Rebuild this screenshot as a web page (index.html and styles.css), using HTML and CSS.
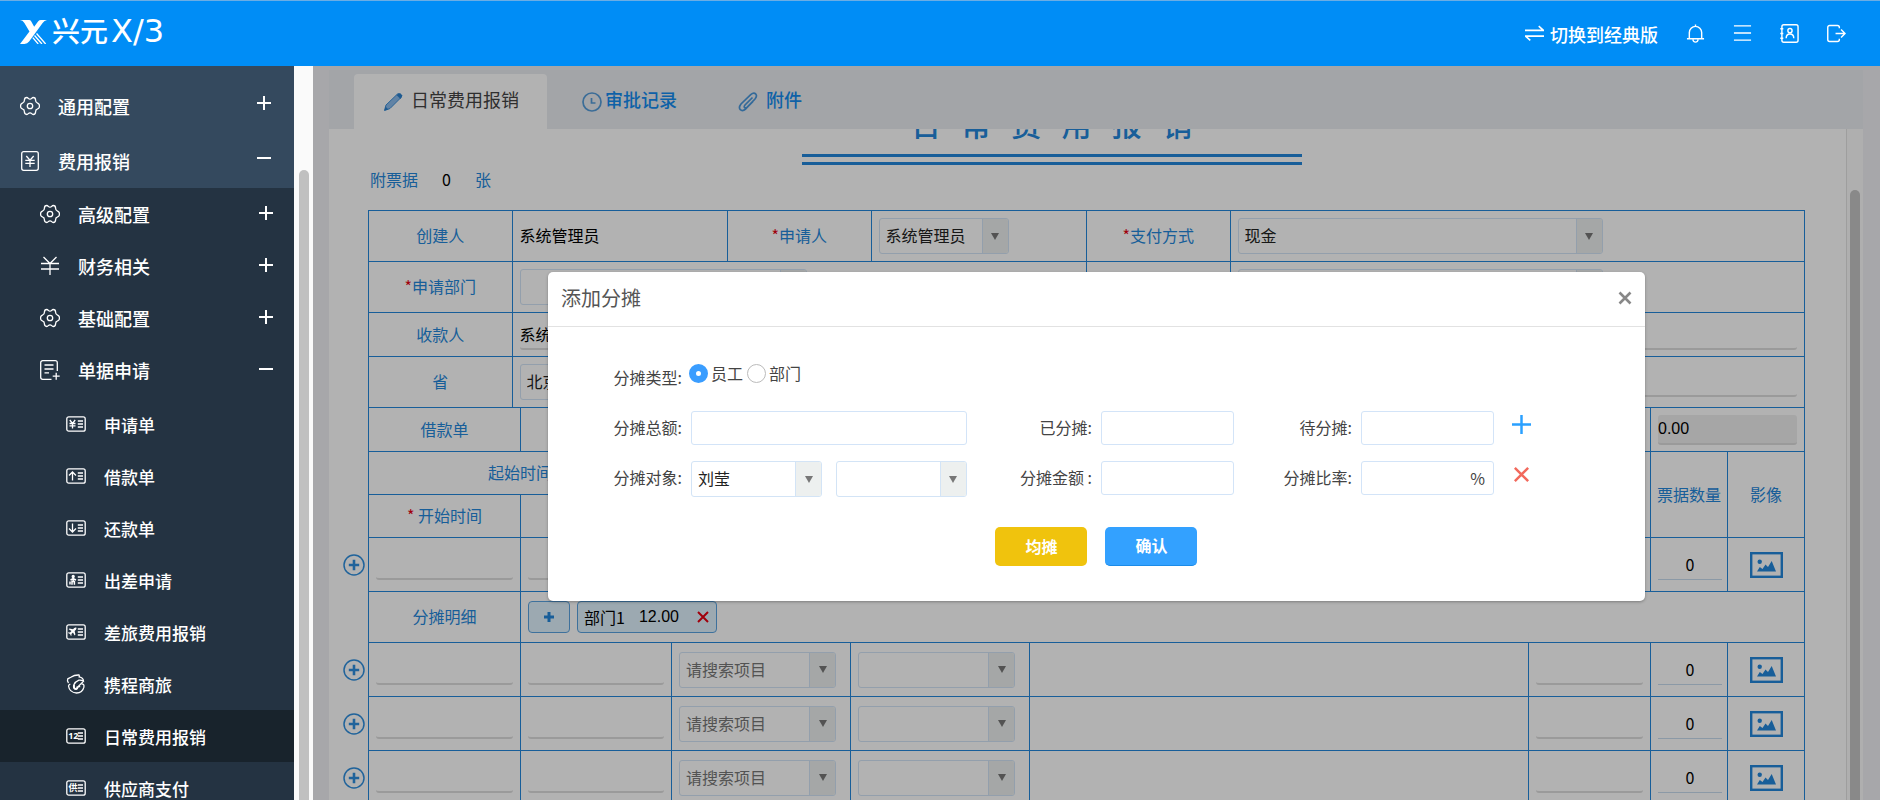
FILE: index.html
```html
<!DOCTYPE html>
<html lang="zh-CN">
<head>
<meta charset="utf-8">
<title>日常费用报销</title>
<link rel="stylesheet" href="styles.css">
</head>
<body>
<svg class="sprite" aria-hidden="true">
  <symbol id="i-gear" viewBox="0 0 20 20"><path d="M10 3.2C11.8 3.2 11.6 1.5 13.2 1.5C15 1.5 15.6 2.8 15.6 4.2C15.6 5.6 16 6.5 17.2 6.8C18.6 7.2 19.5 8.4 19.5 10C19.5 11.6 18.6 12.8 17.2 13.2C16 13.5 15.6 14.4 15.6 15.8C15.6 17.2 15 18.5 13.2 18.5C11.6 18.5 11.8 16.8 10 16.8C8.2 16.8 8.4 18.5 6.8 18.5C5 18.5 4.4 17.2 4.4 15.8C4.4 14.4 4 13.5 2.8 13.2C1.4 12.8 .5 11.6 .5 10C.5 8.4 1.4 7.2 2.8 6.8C4 6.5 4.4 5.6 4.4 4.2C4.4 2.8 5 1.5 6.8 1.5C8.4 1.5 8.2 3.2 10 3.2Z"/><circle cx="10" cy="10" r="2.7"/></symbol>
  <symbol id="i-yenbox" viewBox="0 0 20 20"><rect x="1.7" y=".7" width="16.6" height="18.6" rx="2"/><path d="M6.3 5l3.7 4.2L13.7 5M10 9.2V16M5.3 9.4h9.4M5.3 12.4h9.4"/></symbol>
  <symbol id="i-yen" viewBox="0 0 20 20"><path d="M3.500 1l6.500 6.500L16.500 1M10 7.500V19M1 7.500h18M1 13h18"/></symbol>
  <symbol id="i-doc" viewBox="0 0 20 20"><path d="M17.300 11V2.700a2 2 0 0 0-2-2H2.700a2 2 0 0 0-2 2v14.600a2 2 0 0 0 2 2H11.500M4.500 5h9M4.500 9h9M4.500 12.800h4.500M16.200 12.700v7M12.700 16.200h7"/></symbol>
  <symbol id="i-lines" viewBox="0 0 20 16"><rect x=".8" y=".8" width="18.400" height="14.400" rx="2"/><path d="M11.800 5h5.200M11.800 8h5.200M11.800 11h5.200"/></symbol>
  <symbol id="i-plus" viewBox="0 0 14 14"><path d="M7 0v14M0 7h14"/></symbol>
  <symbol id="i-minus" viewBox="0 0 14 14"><path d="M0 7h14"/></symbol>
  <symbol id="i-addround" viewBox="0 0 22 22"><circle cx="11" cy="11" r="10" stroke-width="1.500"/><path d="M11 5.800v10.400M5.800 11h10.400" stroke-width="2.600"/></symbol>
  <symbol id="i-image" viewBox="0 0 33 26"><rect x="1.200" y="1.200" width="30.600" height="23.600" fill="none" stroke="currentColor" stroke-width="2.400"/><circle cx="9.700" cy="9.700" r="2.200"/><path d="M7 19.500l2.800-4.500 2.700 2 3-4.500 2.500 2.500L21.700 9l4.300 10.500z"/></symbol>
</svg>

<header class="topbar">
  <div class="brand">
    <svg class="brand-mark" viewBox="0 0 80 71"><path fill="#fff" d="M0 0h27q4 0 6 4l9 16 12-16q3-4 8-4h18q-8 1-13 9L46 38 27 64q-5 7-14 7H0L28 34 13 9Q8 0 0 0z"/><path stroke="#fff" stroke-width="4" fill="none" d="M49 40l27 31M43 46l22 25M38 52l16 19"/></svg>
    <span class="brand-name">兴元<b>X/3</b></span>
  </div>
  <nav class="tools">
    <a class="switch" href="#"><svg class="ic" viewBox="0 0 18 16"><path d="M0 5h17.500l-4.500-4M18 10.500H.5L5 14.500"/></svg>切换到经典版</a>
    <button class="tool" aria-label="通知"><svg class="ic" viewBox="0 0 20 20"><path d="M1 15.500h18M3.500 15.500V9a6.500 6.500 0 0 1 13 0v6.500M10 2.500V.5M7.200 16.500q.6 2.600 2.800 2.600t2.800-2.600"/></svg></button>
    <button class="tool" aria-label="菜单"><svg class="ic" viewBox="0 0 20 20"><path d="M1 2h18M1 9.500h18M1 17h18"/></svg></button>
    <button class="tool" aria-label="通讯录"><svg class="ic" viewBox="0 0 20 20"><rect x="2" y=".8" width="17" height="18.400" rx="2"/><circle cx="10.500" cy="7" r="2.200"/><path d="M6.500 15q0-4.500 4-4.500t4 4.500M.3 5h3.200M.3 10h3.200M.3 15h3.200"/></svg></button>
    <button class="tool" aria-label="退出"><svg class="ic" viewBox="0 0 20 20"><path d="M13 4.500V3.600a2 2 0 0 0-2-2H2.800a2 2 0 0 0-2 2v12.800a2 2 0 0 0 2 2H11a2 2 0 0 0 2-2v-.9M9 10h10M14.800 5.800L19 10l-4.200 4.200"/></svg></button>
  </nav>
</header>

<div class="body">
  <aside class="sidebar">
    <ul class="menu">
      <li><a class="m1" href="#"><svg class="ic"><use href="#i-gear"/></svg><span>通用配置</span><svg class="sign"><use href="#i-plus"/></svg></a></li>
      <li><a class="m1" href="#"><svg class="ic"><use href="#i-yenbox"/></svg><span>费用报销</span><svg class="sign"><use href="#i-minus"/></svg></a></li>
    </ul>
    <ul class="menu sub">
      <li><a class="m2" href="#"><svg class="ic"><use href="#i-gear"/></svg><span>高级配置</span><svg class="sign"><use href="#i-plus"/></svg></a></li>
      <li><a class="m2" href="#"><svg class="ic"><use href="#i-yen"/></svg><span>财务相关</span><svg class="sign"><use href="#i-plus"/></svg></a></li>
      <li><a class="m2" href="#"><svg class="ic"><use href="#i-gear"/></svg><span>基础配置</span><svg class="sign"><use href="#i-plus"/></svg></a></li>
      <li><a class="m2" href="#"><svg class="ic"><use href="#i-doc"/></svg><span>单据申请</span><svg class="sign"><use href="#i-minus"/></svg></a>
        <ul class="menu leafs">
          <li><a class="m3" href="#"><svg class="card" viewBox="0 0 20 16"><use href="#i-lines"/><path d="M3.800 4l2.700 3.500L9.200 4M6.500 7.500V12.500M3.500 7.500h6M3.500 9.800h6"/></svg><span>申请单</span></a></li>
          <li><a class="m3" href="#"><svg class="card" viewBox="0 0 20 16"><use href="#i-lines"/><path d="M6.500 12.500V4M3 7.500L6.500 4 10 7.500"/></svg><span>借款单</span></a></li>
          <li><a class="m3" href="#"><svg class="card" viewBox="0 0 20 16"><use href="#i-lines"/><path d="M6.500 3.500V12M3 8.500L6.500 12 10 8.500"/></svg><span>还款单</span></a></li>
          <li><a class="m3" href="#"><svg class="card" viewBox="0 0 20 16"><use href="#i-lines"/><circle cx="7.200" cy="4.500" r="1" fill="#fff"/><path d="M4.500 8L7.200 6.500 10 8M7.200 6.500V9.500M6 12.800V9.500h2.400v3.300M4 9.500v3" stroke-width="1.500"/></svg><span>出差申请</span></a></li>
          <li><a class="m3" href="#"><svg class="card" viewBox="0 0 20 16"><use href="#i-lines"/><path fill="#fff" stroke="none" d="M10.300 3.600q-1-.6-2 .4L7 5.300 3.500 4.500l-.8.800 2.800 1.600L4 8.500l-1.400-.2-.6.600 2 1 1 2 .6-.6-.2-1.400L7 8.500l1.600 2.900.8-.8L8.600 7l1.300-1.300q1-1 .4-2.100z"/></svg><span>差旅费用报销</span></a></li>
          <li><a class="m3" href="#"><svg class="ic dolphin" viewBox="0 0 20 20"><path d="M2.500 9Q.8 7 1.800 4.800L4.800 3.300Q8.500 .8 13 1q.6 1 .2 1.800 4.300.8 4.300 4.400-2.200-1.400-4.600-1.100-3.600 1.400-5 4.700-.8 3 1.200 4 2.600.4 3.100-2.300L16.800 8"/><path d="M15.500 9.800q3 0 2.400 3.400Q16.500 19 10.500 19 3.500 18.500 2.500 12q.2-1.300 1.800-2M12.200 12.500l2 .2"/><path d="M8 11q-.6 3.800 2 4.100 1.600-.6 1.400-2.800" stroke-width="2"/></svg><span>携程商旅</span></a></li>
          <li><a class="m3 active" href="#"><svg class="card" viewBox="0 0 20 16"><use href="#i-lines"/><text x="2.200" y="11.300" class="card-num">12</text></svg><span>日常费用报销</span></a></li>
          <li><a class="m3" href="#"><svg class="card" viewBox="0 0 20 16"><use href="#i-lines"/><text x="2.500" y="11.300" class="card-han">供</text></svg><span>供应商支付</span></a></li>
        </ul>
      </li>
    </ul>
  </aside>
  <div class="side-track"><div class="side-thumb"></div></div>

  <main class="main">
    <nav class="tabs">
      <a class="tab current" href="#"><svg viewBox="0 0 20 20"><path fill="#8bbcec" stroke="#3d8fd8" d="M1.500 18.500L3 13 14.500 2q1-1 2 0L18 3.500q1 1 0 2L7 16.500z"/><path fill="#2c82cf" d="M13.500 3l3.500-2 2.500 2.500-2 3.500z M1.500 18.500l1-4 3 3z"/></svg><span>日常费用报销</span></a>
      <a class="tab" href="#"><svg viewBox="0 0 20 20" fill="none" stroke="#559cd9" stroke-width="1.700"><circle cx="10" cy="10" r="9"/><path d="M9.500 6v5h4"/></svg><span>审批记录</span></a>
      <a class="tab last" href="#"><svg viewBox="0 0 20 20" fill="none" stroke="#4a98dc" stroke-width="1.700"><path d="M14.500 5.500L7 13q-1.500 2-.2 2.800 1.200.6 2.700-1L17 7q2.500-3 .7-5-2-1.800-5 .7L3 12Q.3 15.500 2.300 17.700q2.200 2 5.400-.7L15 9.500"/></svg><span>附件</span></a>
    </nav>
    <div class="panel">
      <div class="form">
        <h1 class="title">日   常   费   用   报   销</h1>
        <div class="bills"><span>附票据</span><span class="bills-num">0</span><span>张</span></div>

        <table class="sheet">
          <colgroup><col class="w10"><col class="w15"><col class="w10"><col class="w15"><col class="w10"><col></colgroup>
          <tr class="tall"><th>创建人</th><td class="plain">系统管理员</td><th><i>*</i>申请人</th>
            <td><div class="pick p-s"><select aria-label="申请人"><option>系统管理员</option></select><span class="caret"></span></div></td>
            <th><i>*</i>支付方式</th>
            <td><div class="pick p-l"><select aria-label="支付方式"><option>现金</option></select><span class="caret"></span></div></td></tr>
          <tr class="tall"><th><i>*</i>申请部门</th><td colspan="3"><div class="pick p-m"><select aria-label="申请部门"><option></option></select><span class="caret"></span></div></td><th></th>
            <td><div class="pick p-l"><select aria-label="项目"><option></option></select><span class="caret"></span></div></td></tr>
          <tr class="short"><th>收款人</th><td colspan="5"><input class="line" aria-label="收款人" value="系统管理员"></td></tr>
          <tr class="tall"><th>省</th><td colspan="3"><div class="pick p-m"><select aria-label="省"><option>北京</option></select><span class="caret"></span></div></td><td colspan="2"><input class="line" aria-label="开户行"></td></tr>
        </table>

        <table class="sheet second">
          <colgroup><col class="c1"><col class="c2"><col class="c3"><col class="c3"><col><col class="c6"><col class="c7"><col class="c7"></colgroup>
          <tr class="short"><th>借款单</th><td colspan="5"></td><td colspan="2"><input class="total" aria-label="借款金额" value="0.00" readonly></td></tr>
          <tr class="head"><th colspan="2">起始时间</th><td rowspan="2"></td><td rowspan="2"></td><td rowspan="2"></td><td rowspan="2"></td><th rowspan="2" class="tight">票据数量</th><th rowspan="2">影像</th></tr>
          <tr class="head"><th><i>*</i> 开始时间</th><td></td></tr>
          <tr class="item"><td class="first"><button class="add" aria-label="添加行"><svg><use href="#i-addround"/></svg></button><input class="line" aria-label="开始时间"></td><td><input class="line" aria-label="结束时间"></td><td></td><td></td><td></td><td></td><td><input class="count" aria-label="票据数量" value="0"></td><td class="mid"><svg class="pic"><use href="#i-image"/></svg></td></tr>
          <tr class="tall"><th>分摊明细</th><td colspan="7"><div class="tags"><button class="chip chip-add" aria-label="添加分摊"><svg viewBox="0 0 12 12"><path d="M6 1v10M1 6h10"/></svg></button><span class="chip"><span>部门1</span><span>12.00</span><button class="chip-x" aria-label="删除"><svg viewBox="0 0 12 12"><path d="M1 1l10 10M11 1L1 11"/></svg></button></span></div></td></tr>
          <tr class="item"><td class="first"><button class="add" aria-label="添加行"><svg><use href="#i-addround"/></svg></button><input class="line" aria-label="开始时间"></td><td><input class="line" aria-label="结束时间"></td><td><div class="pick p-c hint"><select aria-label="项目"><option>请搜索项目</option></select><span class="caret"></span></div></td><td><div class="pick p-c"><select aria-label="科目"><option></option></select><span class="caret"></span></div></td><td></td><td><input class="line" aria-label="金额"></td><td><input class="count" aria-label="票据数量" value="0"></td><td class="mid"><svg class="pic"><use href="#i-image"/></svg></td></tr>
          <tr class="item"><td class="first"><button class="add" aria-label="添加行"><svg><use href="#i-addround"/></svg></button><input class="line" aria-label="开始时间"></td><td><input class="line" aria-label="结束时间"></td><td><div class="pick p-c hint"><select aria-label="项目"><option>请搜索项目</option></select><span class="caret"></span></div></td><td><div class="pick p-c"><select aria-label="科目"><option></option></select><span class="caret"></span></div></td><td></td><td><input class="line" aria-label="金额"></td><td><input class="count" aria-label="票据数量" value="0"></td><td class="mid"><svg class="pic"><use href="#i-image"/></svg></td></tr>
          <tr class="item"><td class="first"><button class="add" aria-label="添加行"><svg><use href="#i-addround"/></svg></button><input class="line" aria-label="开始时间"></td><td><input class="line" aria-label="结束时间"></td><td><div class="pick p-c hint"><select aria-label="项目"><option>请搜索项目</option></select><span class="caret"></span></div></td><td><div class="pick p-c"><select aria-label="科目"><option></option></select><span class="caret"></span></div></td><td></td><td><input class="line" aria-label="金额"></td><td><input class="count" aria-label="票据数量" value="0"></td><td class="mid"><svg class="pic"><use href="#i-image"/></svg></td></tr>
        </table>
      </div>
      <div class="track"><div class="thumb"></div></div>
    </div>

    <div class="overlay">
      <section class="modal" role="dialog" aria-labelledby="dlg-title">
        <header class="modal-head"><h2 id="dlg-title">添加分摊</h2><button class="close" aria-label="关闭"><svg viewBox="0 0 14 14"><path d="M1.500 1.500l11 11M12.500 1.500l-11 11"/></svg></button></header>
        <form class="fields">
          <span class="lab">分摊类型:</span>
          <div class="radios"><label><input type="radio" name="kind" checked>员工</label><label><input type="radio" name="kind">部门</label></div>
          <label class="lab" for="f-total">分摊总额:</label><input class="box" id="f-total">
          <label class="lab" for="f-done">已分摊:</label><input class="box" id="f-done">
          <label class="lab" for="f-todo">待分摊:</label><input class="box" id="f-todo">
          <button type="button" class="act plus" aria-label="添加"><svg viewBox="0 0 20 20"><path d="M10 0v20M0 10h20"/></svg></button>
          <label class="lab" for="f-who">分摊对象:</label>
          <div class="pair"><div class="pick"><select id="f-who"><option>刘莹</option></select><span class="caret"></span></div><div class="pick"><select aria-label="部门"><option></option></select><span class="caret"></span></div></div>
          <label class="lab" for="f-sum">分摊金额 :</label><input class="box" id="f-sum">
          <label class="lab" for="f-rate">分摊比率:</label><div class="box rate"><input id="f-rate"><span>%</span></div>
          <button type="button" class="act del" aria-label="删除"><svg viewBox="0 0 20 20"><path d="M3 3l14 14M17 3L3 17"/></svg></button>
        </form>
        <footer class="modal-foot"><button class="btn gold">均摊</button><button class="btn blue">确认</button></footer>
      </section>
    </div>
  </main>
</div>
</body>
</html>
```
FILE: styles.css
```css
*, *::before, *::after { box-sizing: border-box; }
body {
  margin: 0;
  height: 100vh;
  display: flex;
  flex-direction: column;
  overflow: hidden;
  font: 16px/24px "Noto Sans CJK SC", "Noto Sans", sans-serif;
  color: #000;
}
a { text-decoration: none; color: inherit; }
ul { list-style: none; margin: 0; padding: 0; }
button { border: 0; padding: 0; background: none; font: inherit; color: inherit; display: flex; align-items: center; justify-content: center; }
input, select { font: inherit; color: inherit; min-width: 0; margin: 0; }
svg { display: block; flex: none; }
.sprite { position: absolute; width: 0; height: 0; }

/* top bar */
.topbar {
  flex: none;
  height: 66px;
  border-top: 1px solid #6bade4;
  background: #008df6;
  color: #fff;
  display: flex;
  justify-content: space-between;
  padding: 0 34px 0 20px;
}
.brand { display: flex; align-items: center; gap: 5px; padding-bottom: 4px; }
.brand-mark { width: 27px; height: 24px; }
.brand-name { font-size: 28px; line-height: 32px; font-weight: 500; padding-bottom: 2px; }
.brand-name b { margin-left: 3px; font: 400 32px/32px "DejaVu Sans", sans-serif; }
.tools { display: flex; align-items: center; gap: 28px; }
.tools .ic { width: 19px; height: 19px; fill: none; stroke: #fff; stroke-width: 1.500; }
.switch { display: flex; align-items: center; gap: 6px; font-size: 18px; font-weight: 500; }

/* side menu */
.body { flex: 1; min-height: 0; display: flex; }
.sidebar { flex: none; width: 294px; overflow: hidden; background: #243342; color: #fff; font-size: 18px; font-weight: 500; }
.sidebar > .menu:first-child { background: #34495e; padding: 12px 0 0; }
.menu a { display: flex; align-items: center; }
.menu a > span { flex: 1; }
.menu .ic { width: 20px; height: 20px; }
.menu svg { fill: none; stroke: #fff; stroke-width: 1.300; }
.menu .sign { width: 14px; height: 14px; margin-bottom: 6px; stroke-width: 2; }
.m1 { height: 55px; padding: 0 23px 0 20px; gap: 18px; }
.m2 { height: 52px; padding: 0 21px 0 40px; gap: 18px; }
.m2 .sign { margin-bottom: 2px; }
.m3 { height: 52px; padding: 0 20px 0 66px; gap: 18px; font-size: 17px; }
.menu .m3 > span { padding-top: 2px; }
.m3.active { background: #18232c; }
.leafs { padding-top: 2px; }
.card { width: 20px; height: 16px; }
.card text { fill: #fff; stroke: none; font-weight: 700; }
.card-num { font-size: 9px; font-family: "Open Sans", "Noto Sans", sans-serif; }
.card-han { font-size: 9px; }
.side-track { flex: none; width: 19px; background: #fafafa; padding: 104px 4px 0 5px; }
.side-thumb { height: 100%; background: #c0c0c0; border-radius: 5px 5px 0 0; }

/* page behind the dialog */
.main { flex: 1; min-width: 0; position: relative; display: flex; flex-direction: column; padding: 4px 17px 0 16px; background: #eff0f4; overflow: hidden; }
.tabs { flex: none; height: 59px; display: flex; align-items: flex-end; padding-left: 25px; background: #eaecf1; font-size: 18px; font-weight: 500; color: #158cf0; }
.tab { height: 55px; display: flex; align-items: center; gap: 3px; padding: 0 26px 0 35px; }
.tab svg { width: 20px; height: 20px; }
.tab span { padding-bottom: 6px; }
.tab.current { background: #fff; color: #444; font-weight: 400; border-radius: 4px 4px 0 0; gap: 8px; padding: 0 28px 0 29px; }
.tab.last { gap: 8px; }
.panel { flex: 1; min-height: 0; display: flex; background: #fff; overflow: hidden; }
.form { flex: 1; min-width: 0; padding: 0 41px 0 39px; margin-top: -26px; }
.title {
  width: 500px;
  margin: 0 0 0 calc(50% - 285px);
  font-size: 30px;
  line-height: 40px;
  font-weight: 500;
  color: #2387db;
  text-align: center;
  white-space: pre;
}
.title::after { content: ""; display: block; height: 11px; margin-top: 11px; border: solid #2387db; border-width: 3px 0; }
.bills { display: flex; height: 30px; margin-bottom: 15px; padding: 0 0 2px 2px; align-items: center; gap: 24px; color: #2387db; }
.bills-num { color: #000; }
.track { flex: none; width: 17px; background: #fbfbfb; border-left: 1px solid #e3e3e3; padding: 61px 3px 0; }
.thumb { height: 100%; background: #c4c4c4; border-radius: 5px 5px 0 0; }

.sheet { width: 100%; table-layout: fixed; border-collapse: collapse; }
.sheet.second { margin-top: -1px; }
.sheet th, .sheet td { border: 1px solid #2387db; padding: 0 7px; height: inherit; }
.sheet th { font-weight: 400; color: #2387db; text-align: center; white-space: nowrap; padding-bottom: 2px; }
.sheet .plain { padding-bottom: 2px; }
.sheet th.tight { padding: 0 0 2px; }
.sheet i { color: #e60012; font-style: normal; }
.w10 { width: 10%; } .w15 { width: 15%; }
.c1 { width: 152px; } .c2 { width: 151px; } .c3 { width: 179px; } .c6 { width: 122px; } .c7 { width: 77px; }
.tall { height: 51px; } .short { height: 44px; } .head { height: 43px; } .item { height: 54px; }
.pick { display: flex; height: 36px; border: 1px solid #d3e4f6; border-radius: 3px; background: #fff; overflow: hidden; }
.pick select { flex: 1; appearance: none; border: 0; background: none; padding: 0 6px 2px; color: #222; }
.caret { flex: none; width: 26px; background: #edf0ef; border-left: 1px solid #d3e4f6; display: flex; align-items: center; justify-content: center; }
.caret::before { content: ""; border: solid transparent; border-width: 7px 4px 0; border-top-color: #777; }
.hint select { color: #777; }
.p-s { width: 130px; } .p-m { width: 287px; } .p-l { width: 365px; } .p-c { width: 157px; }
.line { display: block; width: 100%; height: 30px; border: 0; border-bottom: 2px solid #ddd; border-radius: 3px; background: none; padding: 0; }
.total { display: block; width: 100%; height: 30px; border: 0; border-bottom: 2px solid #ddd; border-radius: 3px; background: #eee; padding: 0; font-family: "Liberation Sans", sans-serif; }
.count { display: block; width: 64px; height: 30px; margin: 0 auto; border: 0; border-bottom: 1px solid #c8dcee; background: none; padding: 0; text-align: center; }
.mid .pic { width: 33px; height: 26px; margin: 0 auto; color: #2387db; fill: currentColor; }
.first { position: relative; }
.add { position: absolute; left: -26px; top: 16px; }
.add svg { width: 22px; height: 22px; fill: none; stroke: #2f8fde; }
.tags { display: flex; gap: 7px; }
.chip { height: 32px; display: flex; align-items: center; gap: 14px; padding: 0 7px 0 6px; border: 1px solid #5aa3e0; border-radius: 4px; background: #e0f3fe; }
.chip span + span { font-family: "Liberation Sans", sans-serif; }
.chip-add { width: 42px; padding: 0; }
.chip svg { width: 12px; height: 12px; stroke: #2387db; stroke-width: 3; }
.chip .chip-x svg { stroke: #e60012; stroke-width: 2; margin-left: 4px; }

/* dialog */
.overlay { position: absolute; inset: 0; padding-top: 206px; background: rgba(0, 0, 0, .3); }
.modal { width: 70%; margin: 0 auto; background: #fff; border-radius: 5px; box-shadow: 0 1px 3px rgba(0, 0, 0, .3); color: #444; }
.modal-head { height: 55px; display: flex; align-items: center; justify-content: space-between; padding: 0 13px 3px; border-bottom: 1px solid #e2e2e2; }
.modal-head h2 { margin: 0; font-size: 20px; font-weight: 400; color: #555; }
.close svg { width: 14px; height: 14px; stroke: #888; stroke-width: 2.600; }
.fields { display: grid; grid-template-columns: 125px minmax(0, 276fr) 116px minmax(0, 133fr) 109px minmax(0, 133fr) 38px; gap: 16px 9px; align-items: start; padding: 34px 104px 0 9px; }
.lab { line-height: 32px; padding-bottom: 2px; text-align: right; white-space: nowrap; }
.radios { grid-column: 2 / -1; display: flex; gap: 4px; height: 24px; margin-left: -2px; }
.radios label { display: flex; align-items: center; gap: 3px; }
.radios input { appearance: none; width: 19px; height: 19px; border: 1px solid #bbb; border-radius: 50%; background: #fff; }
.radios input:checked { border: 7px solid #3a9dff; }
.box { width: 100%; height: 34px; border: 1px solid #d3e4f8; border-radius: 3px; background: #fff; padding: 0 8px; }
.rate { display: flex; align-items: center; }
.rate input { flex: 1; border: 0; padding: 0; }
.act { height: 26px; }
.act svg { width: 19px; height: 19px; stroke: #2aa0ff; stroke-width: 2.600; }
.act.del svg { stroke: #f2695c; }
.pair { display: grid; grid-template-columns: 1fr 1fr; gap: 14px; }
.modal-foot { display: flex; justify-content: center; gap: 18px; padding: 30px 0 35px; }
.btn { width: 92px; height: 39px; padding-bottom: 2px; border-radius: 5px; color: #fff; font-weight: 700; }
.gold { background: #f0c30d; }
.blue { background: #33a1ff; border-bottom: 1px solid #1b8be8; }
```
